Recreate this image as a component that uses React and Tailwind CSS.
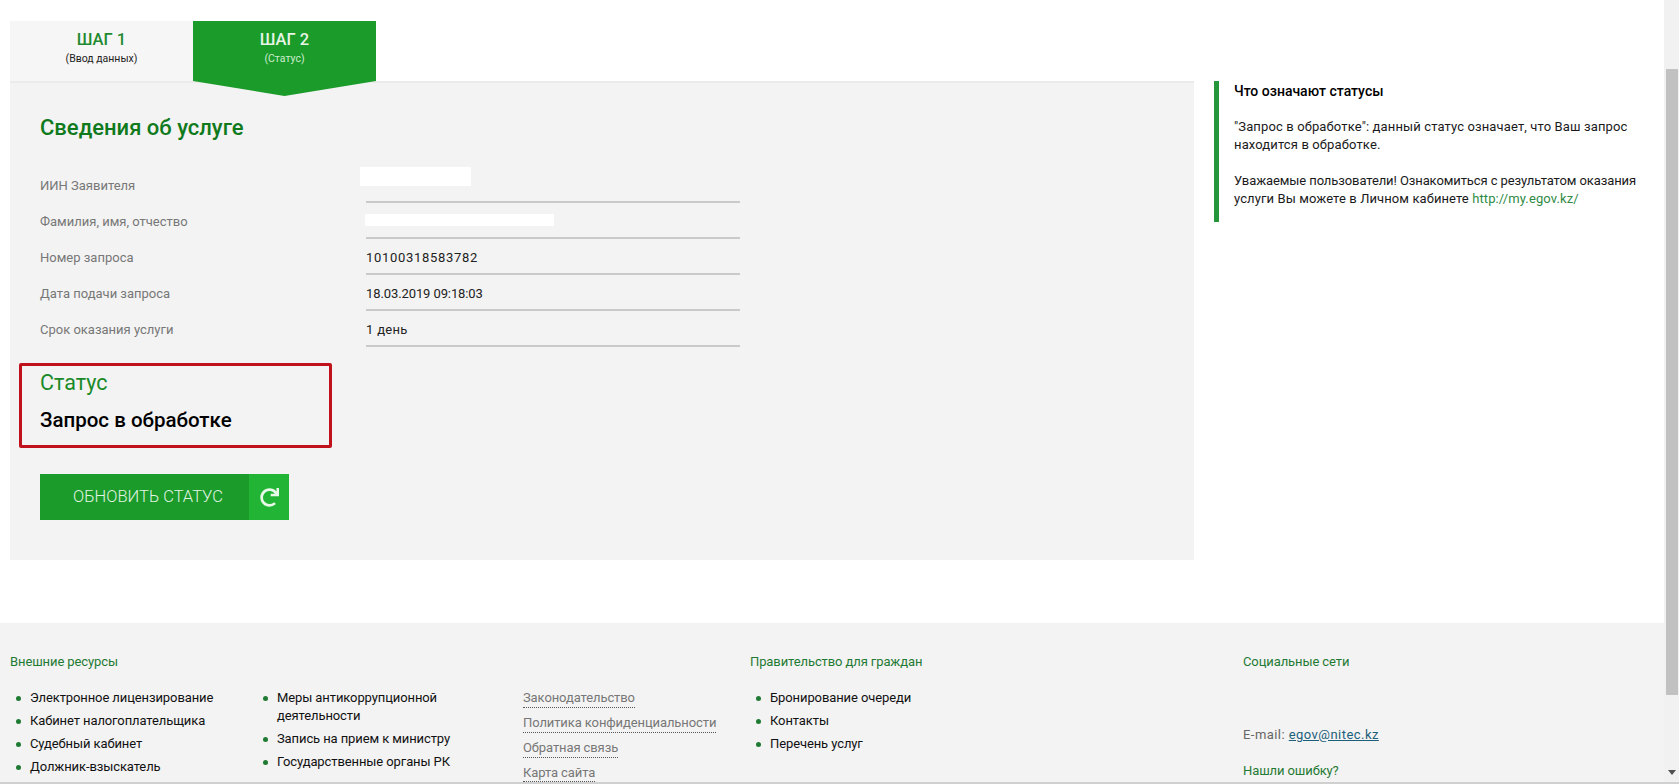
import React from "react";
import { FaRedo } from "react-icons/fa";

const rows = [
  ["ИИН Заявителя", "hidden1", ""],
  ["Фамилия, имя, отчество", "hidden2", ""],
  ["Номер запроса", "10100318583782", "tracking-[0.7px]"],
  ["Дата подачи запроса", "18.03.2019 09:18:03", "tracking-[-0.1px]"],
  ["Срок оказания услуги", "1 день", "tracking-[0.3px]"],
];

function Bullet({ children, className = "" }) {
  return (
    <li className={"relative pl-[20px] text-[#111] " + className}>
      <span className="absolute left-[6px] top-[7px] w-[5px] h-[5px] rounded-full bg-[#1f7a33]" />
      {children}
    </li>
  );
}

export default function App() {
  return (
    <div className="flex h-[784px] w-full overflow-hidden bg-white font-['Roboto',sans-serif] text-[13px] leading-[18px] border-b-2 border-[#d0d0d0]">
      <div className="flex-1 min-w-0 flex flex-col">
        <div className="flex pt-[21px] pl-[10px] pr-[15px] gap-[20px]">
          <div className="w-[1184px] shrink-0">
            <div className="flex h-[60px]">
              <div className="w-[183px] bg-[#f6f6f6] flex flex-col items-center pt-[8px]">
                <div className="text-[16.5px] leading-[22px] text-[#1f8a2f] font-medium">ШАГ 1</div>
                <div className="text-[10.5px] leading-[14px] mt-[1px] text-[#222]">(Ввод данных)</div>
              </div>
              <div className="w-[183px] relative bg-[#1a9b2a] flex flex-col items-center pt-[8px] text-white">
                <div className="text-[16.5px] leading-[22px] font-medium text-[#e6f5e6]">ШАГ 2</div>
                <div className="text-[10.5px] leading-[14px] mt-[1px] text-[#cfeccf]">(Статус)</div>
                <svg className="absolute left-0 top-full w-[183px] h-[15px]" viewBox="0 0 183 15" preserveAspectRatio="none">
                  <polygon points="0,0 183,0 91.5,15" fill="#1a9b2a" />
                </svg>
              </div>
            </div>
            <div className="h-[479px] bg-[#f3f3f3] border-t-2 border-[#ebebeb] pl-[30px] pt-[30px]">
              <h2 className="text-[22px] leading-[30px] font-medium text-[#0f7a1c]">Сведения об услуге</h2>
              <div className="mt-[24px] w-[700px]">
                {rows.map(([label, value, track]) => (
                  <div key={label} className="flex h-[36px]">
                    <div className="w-[326px] pt-[10px] text-[#777]">{label}</div>
                    <div className={"flex-1 border-b-2 border-[#c9c9c9] pt-[10px] text-[#222] " + track}>
                      {value === "hidden1" ? (
                        <div className="relative -left-[6px] -top-[10px] w-[111px] h-[19px] bg-white" />
                      ) : value === "hidden2" ? (
                        <div className="relative -left-[1px] -top-[2px] w-[189px] h-[12px] mt-[3px] bg-white" />
                      ) : (
                        value
                      )}
                    </div>
                  </div>
                ))}
              </div>
              <div className="-ml-[21px] mt-[16px] w-[313px] h-[85px] border-[3px] border-[#c0121c] rounded-[2px] pl-[18px]">
                <div className="text-[21.5px] leading-[30px] text-[#1a8a28] font-normal mt-[2px]">Статус</div>
                <div className="text-[20.5px] leading-[28px] text-black font-medium mt-[8px]">Запрос в обработке</div>
              </div>
              <button className="mt-[26px] flex h-[46px] w-[249px]">
                <span className="w-[209px] h-full bg-[#1a9b2a] flex items-center justify-center pl-[7px] text-[16.5px] text-[#e2f4e2] font-light">ОБНОВИТЬ СТАТУС</span>
                <span className="w-[40px] h-full bg-[#22b535] flex items-center justify-center text-[#e9f9e9]">
                  <FaRedo className="w-[19px] h-[19px]" />
                </span>
              </button>
            </div>
          </div>
          <div className="flex-1 mt-[60px] h-[141px] border-l-[5px] border-[#25963a] pl-[15px] text-[#1a1a1a] whitespace-nowrap">
            <h3 className="text-[14px] leading-[20px] font-medium text-black">Что означают статусы</h3>
            <p className="mt-[17px] tracking-[0.13px]">"Запрос в обработке": данный статус означает, что Ваш запрос<br />находится в обработке.</p>
            <p className="mt-[18px] tracking-[-0.1px]">Уважаемые пользователи! Ознакомиться с результатом оказания<br /><span className="tracking-[0.1px]">услуги Вы можете в Личном кабинете <a className="text-[#2f8a45]">http://my.egov.kz/</a></span></p>
          </div>
        </div>
        <div className="mt-[63px] flex-1 bg-[#f3f3f3] pt-[30px] pl-[10px] flex tracking-[-0.1px]">
          <div className="w-[513px] shrink-0">
            <div className="text-[#1f7a33]">Внешние ресурсы</div>
            <div className="flex mt-[18px]">
              <ul className="w-[247px] flex flex-col gap-[5px]">
                <Bullet>Электронное лицензирование</Bullet>
                <Bullet>Кабинет налогоплательщика</Bullet>
                <Bullet>Судебный кабинет</Bullet>
                <Bullet>Должник-взыскатель</Bullet>
              </ul>
              <ul className="flex-1 flex flex-col gap-[5px]">
                <Bullet>Меры антикоррупционной<br />деятельности</Bullet>
                <Bullet>Запись на прием к министру</Bullet>
                <Bullet>Государственные органы РК</Bullet>
              </ul>
            </div>
          </div>
          <div className="w-[227px] shrink-0 pt-[36px] flex flex-col items-start gap-[6px] text-[#777]">
            <a className="border-b border-dotted border-[#555]">Законодательство</a>
            <a className="border-b border-dotted border-[#555]">Политика конфиденциальности</a>
            <a className="border-b border-dotted border-[#555]">Обратная связь</a>
            <a className="border-b border-dotted border-[#555] leading-[17px]">Карта сайта</a>
          </div>
          <div className="w-[493px] shrink-0">
            <div className="text-[#1f7a33]">Правительство для граждан</div>
            <ul className="mt-[18px] flex flex-col gap-[5px]">
              <Bullet>Бронирование очереди</Bullet>
              <Bullet>Контакты</Bullet>
              <Bullet>Перечень услуг</Bullet>
            </ul>
          </div>
          <div>
            <div className="text-[#1f7a33]">Социальные сети</div>
            <div className="mt-[55px] text-[#666] tracking-[0.45px]">E-mail: <a className="text-[#1d5f7a] underline">egov@nitec.kz</a></div>
            <div className="mt-[18px] text-[#1f7a33]">Нашли ошибку?</div>
          </div>
        </div>
      </div>
      <div className="w-[15px] shrink-0 bg-[#f1f1f1] flex flex-col pl-[2px] pr-[1px] pt-[69px]">
        <div className="h-[626px] bg-[#c1c1c1]" />
        <svg className="w-[12px] h-[8px] mt-[74px]" viewBox="0 0 12 8"><polygon points="2,1 10,1 6,6" fill="#505050" /></svg>
      </div>
    </div>
  );
}
